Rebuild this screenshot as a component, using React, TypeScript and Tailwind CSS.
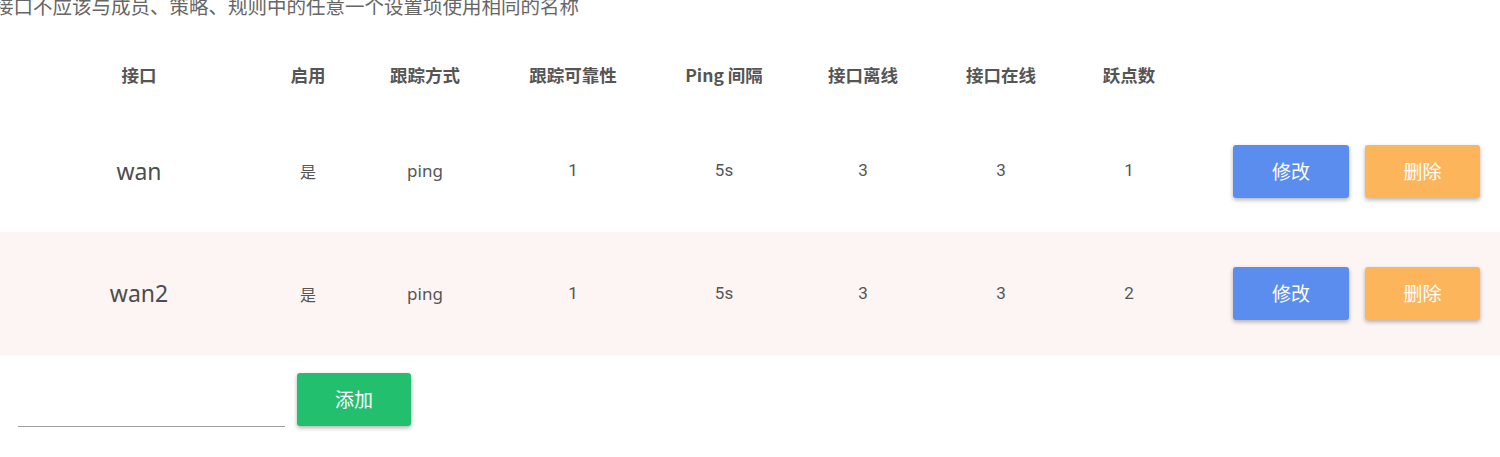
import React from "react";

const headers = ["接口", "启用", "跟踪方式", "跟踪可靠性", "Ping 间隔", "接口离线", "接口在线", "跃点数"];

const rows = [
  { name: "wan", en: "是", mode: "ping", rel: "1", interval: "5s", off: "3", on: "3", hop: "1" },
  { name: "wan2", en: "是", mode: "ping", rel: "1", interval: "5s", off: "3", on: "3", hop: "2" },
];

const grid = "grid grid-cols-[278px_60px_174px_122px_180px_98px_178px_78px_1fr] items-center";
const cjk = "font-['Noto_Sans_CJK_SC',sans-serif]";
const num = "text-center text-[17px] text-[#555] font-['Roboto',sans-serif]";
const btn = "h-[53px] rounded-[3px] text-white text-[19px] shadow-[0_2px_4px_rgba(0,0,0,0.3)]";

export default function App() {
  return (
    <div className="w-[1500px] h-[457px] overflow-hidden bg-white text-[#555] font-['Noto_Sans','Noto_Sans_CJK_SC',sans-serif]">
      <div className={`text-[19.5px] leading-[20px] -mt-[4px] -ml-[6px] text-[#666] whitespace-nowrap ${cjk}`}>
        接口不应该与成员、策略、规则中的任意一个设置项使用相同的名称
      </div>
      <div className={`${grid} h-[94px] pt-[24px] text-[17.5px] font-bold text-[#555] ${cjk}`}>
        {headers.map((h) => (
          <div key={h} className="text-center">{h}</div>
        ))}
        <div />
      </div>
      {rows.map((r, i) => (
        <div key={r.name} className={`${grid} ${i === 1 ? "h-[123px] bg-[#fdf5f4]" : "h-[122px]"}`}>
          <div className="text-center text-[23px] text-[#4d4d4d]">{r.name}</div>
          <div className={`text-center text-[16px] text-[#555] ${cjk}`}>{r.en}</div>
          <div className="text-center text-[17px] text-[#555]">{r.mode}</div>
          <div className={num}>{r.rel}</div>
          <div className={num}>{r.interval}</div>
          <div className={num}>{r.off}</div>
          <div className={num}>{r.on}</div>
          <div className={num}>{r.hop}</div>
          <div className={`flex gap-[16px] pl-[65px] ${cjk}`}>
            <button className={`w-[116px] bg-[#5b8def] ${btn}`}>修改</button>
            <button className={`w-[115px] bg-[#fdb55c] ${btn}`}>删除</button>
          </div>
        </div>
      ))}
      <div className={`flex items-end pl-[18px] pt-[18px] gap-[12px] ${cjk}`}>
        <div className="w-[267px] h-[1px] bg-[#9e9e9e] mb-[-1px]" />
        <button className={`w-[114px] bg-[#22bf6f] ${btn}`}>添加</button>
      </div>
    </div>
  );
}
